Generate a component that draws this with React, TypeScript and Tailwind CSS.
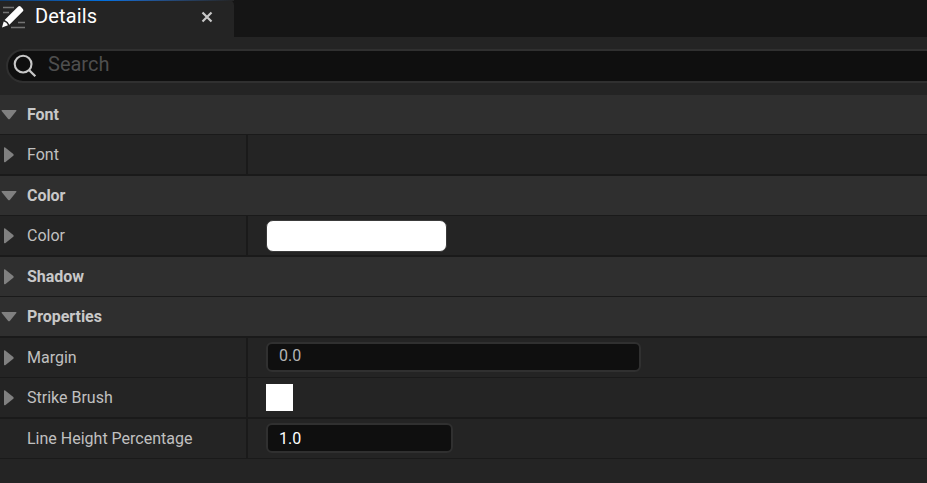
import type { ReactNode } from "react";

type RowProps = {
  label: string;
  expandable?: boolean;
  thick?: boolean;
  children?: ReactNode;
};

export default function App() {
  return (
    <div className="flex h-[483px] w-[927px] flex-col overflow-hidden bg-[#242424] font-['Roboto',sans-serif] text-[16px] leading-[20px] text-[#c0c0c0]">
      <TabBar />
      <SearchBar />

      <main className="mt-3 flex flex-col">
        <CategoryHeader label="Font" open />
        <PropertyRow label="Font" expandable thick />

        <CategoryHeader label="Color" open />
        <PropertyRow label="Color" expandable thick>
          <div className="h-8 w-[181px] rounded-[7px] border border-[#3a3a3a] bg-white" />
        </PropertyRow>

        <CategoryHeader label="Shadow" />
        <CategoryHeader label="Properties" open thick />
        <PropertyRow label="Margin" expandable>
          <ValueField value="0.0" className="w-[375px] pb-[3px] text-[#b4b4b4]" />
        </PropertyRow>
        <PropertyRow label="Strike Brush" expandable thick>
          <div className="size-[27px] bg-white" />
        </PropertyRow>
        <PropertyRow label="Line Height Percentage">
          <ValueField value="1.0" className="w-[187px] pt-px text-white" />
        </PropertyRow>
      </main>
    </div>
  );
}

function TabBar() {
  return (
    <header className="flex h-[37px] shrink-0 bg-[#151515]">
      <div className="relative flex w-[234px] items-start rounded-tr-[5px] bg-[#242424]">
        <div className="absolute inset-x-0 top-0 h-px bg-linear-to-r from-[#123a66] via-[#0070e0] via-45% to-[#242424]" />
        <DetailsIcon />
        <h1 className="mt-1 ml-[9px] text-[20px] leading-6 tracking-[0.15px] text-white">Details</h1>
        <svg className="absolute top-[11px] left-[201px]" width="12" height="12" viewBox="0 0 12 12" stroke="#c8c8c8" strokeWidth="2.2">
          <path d="M1.5 1.5 10.5 10.5M10.5 1.5 1.5 10.5" />
        </svg>
      </div>
    </header>
  );
}

function DetailsIcon() {
  return (
    <svg className="mt-[5px] ml-px" width="25" height="24" viewBox="0 0 25 24">
      <path d="M2 2.5H13M2 7.5H8M17 17.5H24M10 22.5H24" stroke="#747474" strokeWidth="1.3" />
      <path d="M1 22.4 2.7 16.6Q5.8 17.2 7 20.3Z" fill="#fff" />
      <path d="M3.6 14.9 17.2 1.6Q18.4.5 19.6 1.6L21.9 3.9Q23 5.1 21.9 6.3L8.4 19.7Q7.2 16.3 3.6 14.9Z" fill="#fff" />
    </svg>
  );
}

function SearchBar() {
  return (
    <div className="mt-3 -mr-6 ml-1.5 flex h-[34px] shrink-0 items-center rounded-full border-2 border-[#303030] bg-[#0f0f0f]">
      <svg className="ml-[5px]" width="24" height="24" viewBox="0 0 24 24" fill="none" stroke="#c8c8c8" strokeWidth="2.1">
        <circle cx="10.1" cy="10.1" r="8.4" />
        <path d="m16 16 6.3 6.3" strokeWidth="2.3" />
      </svg>
      <span className="ml-[11px] pb-1 text-[20px] leading-6 text-[#4e4e4e]">Search</span>
    </div>
  );
}

function Arrow({ open }: { open?: boolean }) {
  return (
    <svg className="shrink-0" width="18" height="18" viewBox="0 0 18 18" fill="#808080">
      {open ? (
        <path d="M2.2 4H15.8Q17 4 16.3 5.1L10 12.7Q9 13.9 8 12.7L1.7 5.1Q1 4 2.2 4Z" />
      ) : (
        <path d="M4 2Q4 .9 5.2 1.4L13.3 7.9Q14.2 8.8 13.3 9.7L5.2 16.2Q4 16.7 4 15.6Z" />
      )}
    </svg>
  );
}

function CategoryHeader({ label, open, thick }: { label: string; open?: boolean; thick?: boolean }) {
  return (
    <div className={`flex shrink-0 items-center bg-[#2f2f2f] border-[#1a1a1a] ${thick ? "h-[41px] border-b-2" : "h-10 border-b"}`}>
      <Arrow open={open} />
      <h2 className="ml-[9px] font-bold tracking-[-0.05px] text-[#c8c8c8]">{label}</h2>
    </div>
  );
}

function PropertyRow({ label, expandable, thick, children }: RowProps) {
  return (
    <div className={`flex shrink-0 border-[#1a1a1a] ${thick ? "h-[41px] border-b-2" : "h-10 border-b"}`}>
      <div className="flex w-[248px] items-center border-r-2 border-[#1a1a1a]">
        {expandable ? <Arrow /> : <span className="w-[18px]" />}
        <span className="ml-[9px]">{label}</span>
      </div>
      <div className="flex flex-1 items-center pl-[18px]">{children}</div>
    </div>
  );
}

function ValueField({ value, className }: { value: string; className: string }) {
  return (
    <div className={`mb-px flex h-[30px] items-center rounded-[6px] border-2 border-[#303030] bg-[#0f0f0f] pl-[11px] ${className}`}>
      {value}
    </div>
  );
}
